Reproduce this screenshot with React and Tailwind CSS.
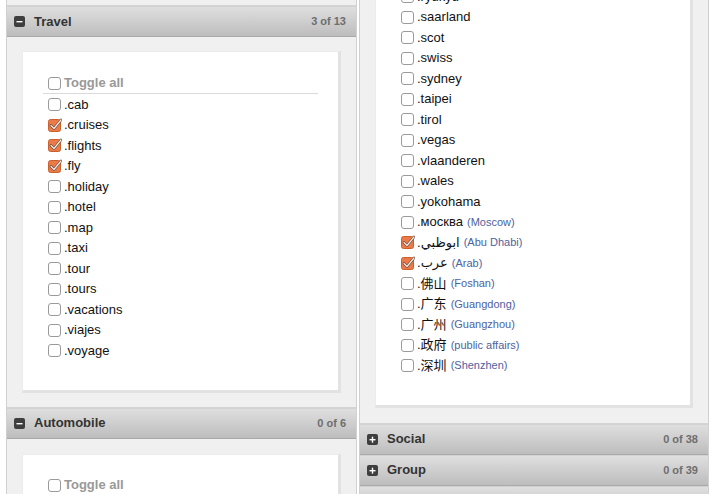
import { useState } from 'react';

const font = { fontFamily: '"Liberation Sans", "Noto Sans CJK SC", "DejaVu Sans", sans-serif' };

const travel = ['.cab', '.cruises', '.flights', '.fly', '.holiday', '.hotel', '.map', '.taxi', '.tour', '.tours', '.vacations', '.viajes', '.voyage'];

const geo = [
    ['.ryukyu'],
    ['.saarland'],
    ['.scot'],
    ['.swiss'],
    ['.sydney'],
    ['.taipei'],
    ['.tirol'],
    ['.vegas'],
    ['.vlaanderen'],
    ['.wales'],
    ['.yokohama'],
    ['.москва', 'Moscow'],
    ['.ابوظبي', 'Abu Dhabi'],
    ['.عرب', 'Arab'],
    ['.佛山', 'Foshan'],
    ['.广东', 'Guangdong'],
    ['.广州', 'Guangzhou'],
    ['.政府', 'public affairs'],
    ['.深圳', 'Shenzhen'],
];

const Box = ({ checked, onClick }) => (
    <span onClick={onClick} className="w-[14px] h-[14px] shrink-0 mr-[2px] cursor-pointer">
        {checked ? (
            <svg width="14" height="14" viewBox="0 0 14 14">
                <rect x="0.5" y="1.5" width="12" height="12" rx="2" fill="#ec7a48" stroke="#c9612f" />
                <polyline points="3,7.5 6,10.5 13,2" fill="none" stroke="#6b4a3a" strokeWidth="2.6" strokeLinecap="round" strokeLinejoin="round" />
                <polyline points="3,7.5 6,10.5 13,2" fill="none" stroke="#f3ede9" strokeWidth="1.2" strokeLinecap="round" strokeLinejoin="round" />
            </svg>
        ) : (
            <span className="block w-[13px] h-[13px] mt-[1px] rounded-[3px] border border-[#9a9a9a] bg-white" />
        )}
    </span>
);

const Header = ({ open, title, count }) => (
    <div className="h-[31px] flex items-center pl-[7px] pr-[10px] border-t border-b border-t-[#d2d2d2] border-b-[#a9a9a9] bg-gradient-to-b from-[#dfdfdf] to-[#bdbdbd]">
        <span className="w-[11px] h-[11px] rounded-[2px] bg-[#3e3e3e] flex items-center justify-center mr-[9px]">
            <svg width="7" height="7" viewBox="0 0 7 7">
                <rect x="0.5" y="3" width="6" height="1.4" fill="#fff" />
                {!open && <rect x="2.8" y="0.7" width="1.4" height="6" fill="#fff" />}
            </svg>
        </span>
        <span className="text-[13px] font-bold text-[#333]">{title}</span>
        <span className="ml-auto text-[11px] font-bold text-[#6e6e6e]">{count}</span>
    </div>
);

const Row = ({ checked, onClick, children }) => (
    <li className="h-[20.5px] flex items-center pl-[5px] text-[13px] text-[#111]">
        <Box checked={checked} onClick={onClick} />
        {children}
    </li>
);

const Card = ({ children, className = '' }) => (
    <div className={`bg-white border border-[#ececec] border-r-[3px] border-b-[3px] border-r-[#e2e2e2] border-b-[#e2e2e2] px-[20px] pb-[29px] ${className}`}>
        {children}
    </div>
);

const App = () => {
    const [checked, setChecked] = useState({ '.cruises': true, '.flights': true, '.fly': true, '.ابوظبي': true, '.عرب': true });
    const toggle = (k) => setChecked({ ...checked, [k]: !checked[k] });

    return (
        <div style={font} className="bg-white h-[494px] overflow-hidden flex items-start pl-[6px] gap-[2px]">
            {/* left column */}
            <div className="w-[351px] h-[600px] border-x border-[#d0d0d0] bg-[#f0f0f0]">
                <div className="h-[6px] border-b border-[#d4d4d4]" />
                <Header open title="Travel" count="3 of 13" />
                <div className="px-[15px] pt-[14px] pb-[14px] border-b border-[#d4d4d4]">
                    <Card className="pt-[21px]">
                        <ul>
                            <li className="h-[21px] flex items-center pl-[5px] border-b border-[#dadada] text-[13px] font-bold text-[#999]">
                                <Box checked={false} />
                                Toggle all
                            </li>
                            {travel.map((t) => (
                                <Row key={t} checked={!!checked[t]} onClick={() => toggle(t)}>{t}</Row>
                            ))}
                        </ul>
                    </Card>
                </div>
                <Header open title="Automobile" count="0 of 6" />
                <div className="px-[15px] pt-[15px]">
                    <Card className="pt-[20px]">
                        <ul>
                            <li className="h-[21px] flex items-center pl-[5px] border-b border-[#dadada] text-[13px] font-bold text-[#999]">
                                <Box checked={false} />
                                Toggle all
                            </li>
                        </ul>
                    </Card>
                </div>
            </div>

            {/* right column */}
            <div className="w-[350px] h-[600px] border-x border-[#d0d0d0] bg-[#f0f0f0] overflow-hidden">
                <div className="px-[15px] pb-[15px] -mt-[14px] border-b border-[#d4d4d4]">
                    <Card className="border-t-0">
                        <ul>
                            {geo.map(([t, note]) => (
                                <Row key={t} checked={!!checked[t]} onClick={() => toggle(t)}>
                                    {t}
                                    {note && <span className="ml-[4px] text-[11px] text-[#4d62a0]">({note})</span>}
                                </Row>
                            ))}
                        </ul>
                    </Card>
                </div>
                <Header title="Social" count="0 of 38" />
                <Header title="Group" count="0 of 39" />
                <Header title="Other" count="0 of 12" />
            </div>
        </div>
    );
};

export default App;
